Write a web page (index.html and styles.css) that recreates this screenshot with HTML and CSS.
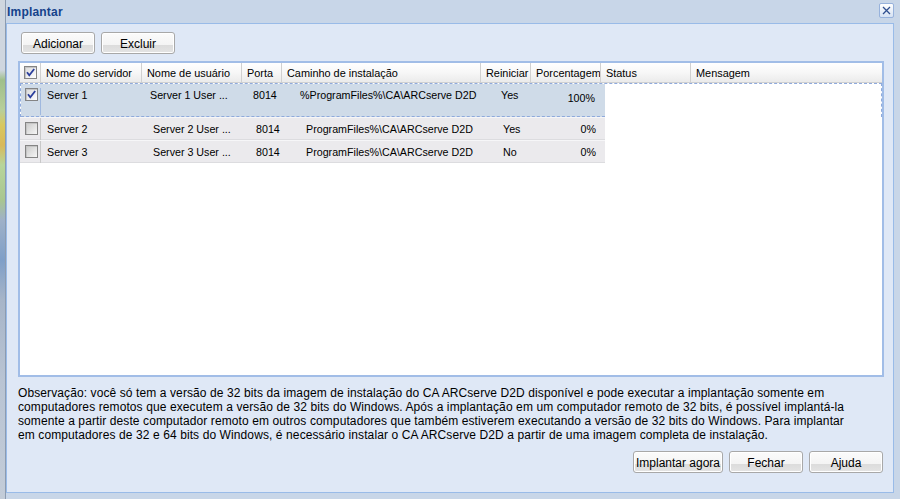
FILE: index.html
```html
<!DOCTYPE html>
<html>
<head>
<meta charset="utf-8">
<link rel="stylesheet" href="styles.css">
</head>
<body>
<div class="desk">
  <div class="behind"></div>
  <div class="win">
    <div class="titlebar">
      <span class="title">Implantar</span>
      <span class="close"><svg width="13" height="13" viewBox="0 0 13 13"><path d="M3 3 L10 10 M10 3 L3 10" stroke="#2f4f8f" stroke-width="1.3" fill="none"/></svg></span>
    </div>
    <div class="panel">
      <div class="toolbar">
        <button class="btn w73">Adicionar</button>
        <button class="btn w73">Excluir</button>
      </div>
      <div class="grid">
        <div class="ghead">
          <div class="hc c-chk"><span class="cb"><svg width="11" height="11" viewBox="0 0 11 11"><path d="M2 5.2 L4.3 8.3 L9.2 2" stroke="#2b3f9c" stroke-width="1.8" fill="none"/></svg></span></div>
          <div class="hc c-srv">Nome do servidor</div>
          <div class="hc c-usr">Nome de usuário</div>
          <div class="hc c-prt">Porta</div>
          <div class="hc c-pth">Caminho de instalação</div>
          <div class="hc c-rei">Reiniciar</div>
          <div class="hc c-pct">Porcentagem</div>
          <div class="hc c-sts">Status</div>
          <div class="hc c-msg">Mensagem</div>
        </div>
        <div class="gbody">
          <div class="drop">
            <div class="row sel">
              <div class="cell c-chk chk1"><span class="cb"><svg width="11" height="11" viewBox="0 0 11 11"><path d="M2 5.2 L4.3 8.3 L9.2 2" stroke="#2b3f9c" stroke-width="1.8" fill="none"/></svg></span></div>
              <div class="cell c-srv p6">Server 1</div>
              <div class="cell c-usr p8">Server 1 User ...</div>
              <div class="cell c-prt p11">8014</div>
              <div class="cell c-pth p18">%ProgramFiles%\CA\ARCserve D2D</div>
              <div class="cell c-rei p20">Yes</div>
              <div class="cell c-pct r6 low">100%</div>
            </div>
          </div>
          <div class="row norm">
            <div class="cell c-chk chk2"><span class="cb off"></span></div>
            <div class="cell c-srv p7">Server 2</div>
            <div class="cell c-usr p11">Server 2 User ...</div>
            <div class="cell c-prt p14">8014</div>
            <div class="cell c-pth p24">ProgramFiles%\CA\ARCserve D2D</div>
            <div class="cell c-rei p22">Yes</div>
            <div class="cell c-pct r5">0%</div>
          </div>
          <div class="row norm">
            <div class="cell c-chk chk2"><span class="cb off"></span></div>
            <div class="cell c-srv p7">Server 3</div>
            <div class="cell c-usr p11">Server 3 User ...</div>
            <div class="cell c-prt p14">8014</div>
            <div class="cell c-pth p24">ProgramFiles%\CA\ARCserve D2D</div>
            <div class="cell c-rei p22">No</div>
            <div class="cell c-pct r5">0%</div>
          </div>
        </div>
      </div>
      <p class="note">Observação: você só tem a versão de 32 bits da imagem de instalação do CA ARCserve D2D disponível e pode executar a implantação somente em<br>computadores remotos que executem a versão de 32 bits do Windows. Após a implantação em um computador remoto de 32 bits, é possível implantá-la<br>somente a partir deste computador remoto em outros computadores que também estiverem executando a versão de 32 bits do Windows. Para implantar<br>em computadores de 32 e 64 bits do Windows, é necessário instalar o CA ARCserve D2D a partir de uma imagem completa de instalação.</p>
      <div class="actions">
        <button class="btn w89">Implantar agora</button>
        <button class="btn w74">Fechar</button>
        <button class="btn w74">Ajuda</button>
      </div>
    </div>
  </div>
</div>
</body>
</html>
```
FILE: styles.css
```css
html, body {
  margin: 0;
  padding: 0;
  width: 900px;
  height: 499px;
  overflow: hidden;
  font-family: "Liberation Sans", Arial, sans-serif;
  color: #000;
}

.desk {
  display: flex;
  width: 900px;
  height: 499px;
}

.behind {
  width: 6px;
  flex: none;
  border-right: 1px solid #8c9bb0;
  box-sizing: border-box;
  background: linear-gradient(to bottom,
    #cfd6df 0, #cfd6df 70px,
    #9fbf8a 80px, #b8cf9a 110px,
    #d8c860 125px, #d9b95a 145px,
    #b7d59a 165px, #a9c690 200px,
    #9fb1c8 220px, #7f9fc8 260px,
    #a7b5c8 300px, #b9c4d3 380px,
    #c3ccd8 499px);
}

.win {
  flex: 1;
  display: flex;
  flex-direction: column;
  background: #c8d6e8;
}

.titlebar {
  height: 23px;
  flex: none;
  display: flex;
  align-items: center;
  justify-content: space-between;
  padding: 0 6px 0 1px;
}

.title {
  font-weight: bold;
  font-size: 12px;
  letter-spacing: 0.2px;
  color: #15428b;
}

.close {
  width: 13px;
  height: 13px;
  border: 1px solid #97b2dc;
  border-radius: 2px;
  background: linear-gradient(#ffffff, #d6e2f3);
  display: flex;
  position: relative;
  top: -1px;
}

.panel {
  height: 470px;
  box-sizing: border-box;
  margin-right: 6px;
  border: 1px solid #99bbe8;
  background: #dfe8f6;
  padding: 8px 9px 0 11px;
  display: flex;
  flex-direction: column;
}

.toolbar {
  display: flex;
  gap: 6px;
  padding-left: 3px;
  margin-bottom: 7px;
}

.btn {
  height: 22px;
  box-sizing: border-box;
  border: 1px solid #a8a8a8;
  border-radius: 3px;
  background: linear-gradient(#fbfbfb 0, #f4f4f4 58%, #dcdcdc 62%, #e4e4e4 100%);
  box-shadow: inset 0 0 0 1px #ffffff;
  font-family: "Liberation Sans", Arial, sans-serif;
  font-size: 12px;
  color: #000;
  padding: 2px 0 0 0;
  margin: 0;
}

.w73 { width: 74px; }
.w74 { width: 74px; }
.w89 { width: 90px; }

.grid {
  height: 316px;
  box-sizing: border-box;
  border: 2px solid #a1bde7;
  background: #ffffff;
  font-size: 10.7px;
}

.ghead {
  display: flex;
  height: 20px;
  box-sizing: border-box;
  border-bottom: 1px solid #d0d0d0;
  background: linear-gradient(#ffffff 0, #f7f7f7 50%, #ebebeb 100%);
  font-size: 10.9px;
}

.hc {
  box-sizing: border-box;
  border-right: 1px solid #d0d0d0;
  padding-left: 5px;
  display: flex;
  align-items: center;
  white-space: nowrap;
  overflow: hidden;
}

.hc.c-chk { padding-left: 4px; }
.hc.c-msg { border-right: none; flex: 1; }

.c-chk { width: 21px; flex: none; }
.c-srv { width: 101px; flex: none; }
.c-usr { width: 100px; flex: none; }
.c-prt { width: 40px; flex: none; }
.c-pth { width: 199px; flex: none; }
.c-rei { width: 50px; flex: none; }
.c-pct { width: 70px; flex: none; }
.c-sts { width: 90px; flex: none; }

.cb {
  width: 11px;
  height: 11px;
  border: 1px solid #848484;
  background: linear-gradient(135deg, #d9d9d9 0, #f0f0f0 60%, #ffffff 100%);
  box-shadow: inset 1px 1px 0 #c4c4c4;
  display: flex;
  flex: none;
}

.cb.off {
  background: linear-gradient(135deg, #c9c9c9 0, #e2e2e2 55%, #f6f6f6 100%);
}

.drop {
  border-top: 1px dashed #8faadc;
  border-left: 1px dashed #8faadc;
  border-right: 1px dashed #8faadc;
}

.row {
  display: flex;
  white-space: nowrap;
}

.row.sel {
  width: 584px;
  height: 33px;
  box-sizing: border-box;
  border-bottom: 1px dashed #8faadc;
  background: #cfdbe8;
}

.row.norm {
  width: 585px;
  height: 23px;
  box-sizing: border-box;
  border-top: 1px solid #f6f6f8;
  border-bottom: 1px solid #dcdcdf;
  background: #ebeaed;
  align-items: center;
}

.cell {
  box-sizing: border-box;
  overflow: hidden;
}

.sel .cell { padding-top: 5px; }
.sel .cell.low { padding-top: 8px; }

.chk1 {
  width: 20px;
  padding-left: 4px;
  padding-top: 4px !important;
  position: relative;
}

.chk1::after {
  content: "";
  position: absolute;
  right: 0;
  top: 4px;
  bottom: 1px;
  border-right: 1px solid #9fb8df;
}

.chk2 {
  width: 21px;
  height: 22px;
  padding-left: 5px;
  display: flex;
  align-items: center;
  border-right: 1px solid #c8c8c8;
}

.p6 { padding-left: 6px; }
.p7 { padding-left: 6px; }
.p8 { padding-left: 8px; }
.p11 { padding-left: 11px; }
.p14 { padding-left: 14px; }
.p18 { padding-left: 18px; }
.p20 { padding-left: 20px; }
.p22 { padding-left: 22px; }
.p24 { padding-left: 24px; }
.r6 { text-align: right; padding-right: 6px; }
.r5 { text-align: right; padding-right: 5px; }

.note {
  margin: 9px 0 0 0;
  font-size: 12px;
  line-height: 14px;
  letter-spacing: 0.1px;
  white-space: nowrap;
}

.actions {
  display: flex;
  justify-content: flex-end;
  gap: 6px;
  margin-top: 9px;
  padding-right: 1px;
}
```
